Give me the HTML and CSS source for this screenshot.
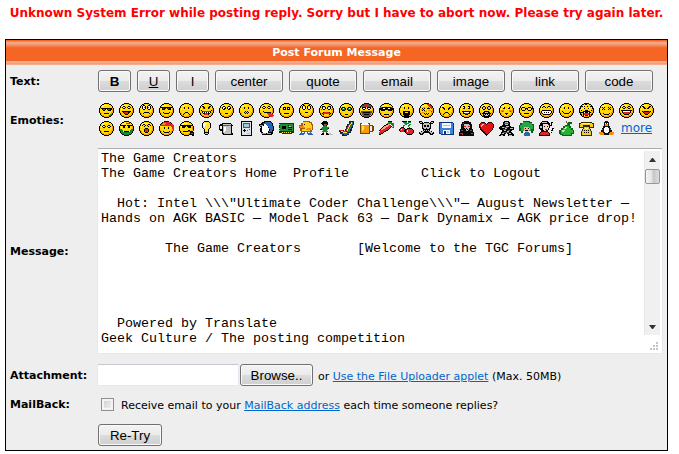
FILE: index.html
```html
<!DOCTYPE html>
<html lang="en">
<head>
    <meta charset="UTF-8">
    <meta name="viewport" content="width=device-width, initial-scale=1.0">
    <title>Post Forum Message</title>
    <link rel="stylesheet" href="styles.css">
</head>
<body>

    <svg class="sprite" aria-hidden="true">
        <symbol id="face" viewBox="0 0 15 15">
            <path fill="#000" d="M5 0h5v1h2v1h1v1h1v2h1v5h-1v2h-1v1h-1v1h-2v1h-5v-1h-2v-1h-1v-1h-1v-2h-1v-5h1v-2h1v-1h1v-1h2z"/>
            <path fill="#f0a000" d="M5 1h5v1h2v1h1v2h1v5h-1v2h-1v1h-2v1h-5v-1h-2v-1h-1v-2h-1v-5h1v-2h1v-1h2z"/>
            <path fill="#ffd90c" d="M5 1h5v1h2v1h1v6h-1v2h-1v1h-2v1h-4v-1h-2v-2h-1v-1h-1v-4h1v-2h1v-1h2z"/>
            <path fill="#fff27a" d="M4 2h4v1h-3v1h-2v3h-1v-2h1v-2h1z"/>
        </symbol>
    </svg>

    <p class="error">Unknown System Error while posting reply. Sorry but I have to abort now. Please try again later.</p>

    <form class="post-form" onsubmit="return false">
        <h1>Post Forum Message</h1>

        <div class="row text-row">
            <span class="label">Text:</span>
            <div class="buttons">
                <button type="button" class="small"><b>B</b></button>
                <button type="button" class="small"><u>U</u></button>
                <button type="button" class="small">I</button>
                <button type="button">center</button>
                <button type="button">quote</button>
                <button type="button">email</button>
                <button type="button">image</button>
                <button type="button">link</button>
                <button type="button">code</button>
            </div>
        </div>

        <div class="row emoties-row">
            <span class="label">Emoties:</span>
            <div class="emoties">
                <!-- first line -->
                <svg viewBox="0 0 15 15"><use href="#face"/><path class="k" d="M2 5.5h11M3 6.5h4M8 6.5h5M4 7.5h2M9 7.5h3M5 10.5h5"/><path class="g" d="M4 6.5h2M9 6.5h2M10 12.5h2M11 11.5h2"/></svg>
                <svg viewBox="0 0 15 15"><use href="#face"/><path class="k" d="M4 3.5h2M9 3.5h2M3 4.5h1M6 4.5h1M8 4.5h1M11 4.5h1M4 5.5h2M9 5.5h2M3 8.5h9M4 9.5h7M5 10.5h5M6 11.5h3"/><path class="w" d="M4 4.5h1M9 4.5h1"/><path class="r" d="M6 10.5h3M5 9.5h4"/></svg>
                <svg viewBox="0 0 15 15"><use href="#face"/><path class="k" d="M4 2.5h2M9 2.5h2M3 3.5h1M6 3.5h1M8 3.5h1M11 3.5h1M3 4.5h1M6 4.5h1M8 4.5h1M11 4.5h1M3 5.5h1M6 5.5h1M8 5.5h1M11 5.5h1M4 6.5h2M9 6.5h2M5 9.5h5M4 10.5h1M10 10.5h1"/><path class="w" d="M4 3.5h2M9 3.5h2M4 4.5h2M9 4.5h2M4 5.5h2M9 5.5h2"/><path class="r" d="M5 4.5h1M9 4.5h1"/></svg>
                <svg viewBox="0 0 15 15"><use href="#face"/><path class="k" d="M1 4.5h13M3 5.5h4M8 5.5h4M3 6.5h3M9 6.5h3M4 9.5h1M10 9.5h1M5 10.5h5"/><path class="d" d="M4 5.5h1M9 5.5h1"/></svg>
                <svg viewBox="0 0 15 15"><use href="#face"/><path class="k" d="M5 4.5h1M9 4.5h1M5 5.5h1M9 5.5h1M6 9.5h3M5 10.5h1M9 10.5h1M4 11.5h1M10 11.5h1"/></svg>
                <svg viewBox="0 0 15 15"><use href="#face"/><path class="k" d="M3 3.5h2M10 3.5h2M4 4.5h2M9 4.5h2M4 5.5h2M9 5.5h2M2 7.5h1M12 7.5h1M3 8.5h9M3 9.5h9M4 10.5h7M5 11.5h5"/><path class="r" d="M4 5.5h1M10 5.5h1M4 8.5h7M5 11.5h4M6 10.5h3"/><path class="w" d="M4 9.5h1M6 9.5h1M8 9.5h1M10 9.5h1"/></svg>
                <svg viewBox="0 0 15 15"><use href="#face"/><path class="k" d="M4 3.5h2M9 3.5h2M3 4.5h1M6 4.5h1M8 4.5h1M11 4.5h1M3 5.5h1M6 5.5h1M8 5.5h1M11 5.5h1M4 6.5h2M9 6.5h2M6 10.5h3"/><path class="w" d="M4 4.5h2M9 4.5h2M4 5.5h1M9 5.5h1"/><path class="k" d="M5 5.5h1M10 5.5h1"/></svg>
                <svg viewBox="0 0 15 15"><use href="#face"/><path class="k" d="M5 4.5h1M9 4.5h1M5 5.5h1M9 5.5h1M6 8.5h1M8 8.5h1M7 9.5h1M6 10.5h1M8 10.5h1M5 9.5h1M9 9.5h1"/></svg>
                <svg viewBox="0 0 15 15"><use href="#face"/><path class="k" d="M4 3.5h2M9 3.5h2M3 4.5h1M6 4.5h1M8 4.5h1M11 4.5h1M4 5.5h2M9 5.5h2M4 8.5h1M5 9.5h7"/><path class="w" d="M4 4.5h1M9 4.5h1"/><path class="r" d="M8 10.5h4M9 11.5h5M10 12.5h5M11 13.5h3"/></svg>
                <svg viewBox="0 0 15 15"><use href="#face"/><path class="k" d="M4 4.5h3M8 4.5h3M4 5.5h1M6 5.5h1M8 5.5h1M10 5.5h1M4 6.5h3M8 6.5h3M5 10.5h5"/><path class="w" d="M5 5.5h1M9 5.5h1"/></svg>
                <svg viewBox="0 0 15 15"><use href="#face"/><path class="k" d="M4 2.5h2M9 2.5h2M3 3.5h1M6 3.5h1M8 3.5h1M11 3.5h1M3 4.5h1M6 4.5h1M8 4.5h1M11 4.5h1M3 5.5h1M6 5.5h1M8 5.5h1M11 5.5h1M4 6.5h2M9 6.5h2M6 9.5h3"/><path class="w" d="M4 4.5h2M9 4.5h2M4 5.5h2M9 5.5h2"/></svg>
                <svg viewBox="0 0 15 15"><use href="#face"/><path class="k" d="M3 3.5h3M9 3.5h3M3 4.5h1M6 4.5h1M8 4.5h1M11 4.5h1M3 5.5h1M6 5.5h1M8 5.5h1M11 5.5h1M4 6.5h2M9 6.5h2M4 9.5h7M3 10.5h9M4 11.5h1M10 11.5h1"/><path class="w" d="M4 5.5h2M9 5.5h2"/><path class="r" d="M4 10.5h7M5 9.5h5M2 6.5h1M12 6.5h1"/></svg>
                <svg viewBox="0 0 15 15"><use href="#face"/><path class="k" d="M3 4.5h3M9 4.5h3M2 5.5h1M6 5.5h1M8 5.5h1M12 5.5h1M2 6.5h1M6 6.5h1M8 6.5h1M12 6.5h1M3 7.5h3M9 7.5h3M6 11.5h3"/><path class="g" d="M3 5.5h3M9 5.5h3M3 6.5h3M9 6.5h3"/><path class="w" d="M4 5.5h1M10 5.5h1"/></svg>
                <svg viewBox="0 0 15 15"><use href="#face"/><path class="d" d="M5 1.5h5M3 2.5h9M2 3.5h11M2 8.5h11M2 9.5h11M3 10.5h9M3 11.5h9M4 12.5h7M5 13.5h5"/><path class="k" d="M3 4.5h4M8 4.5h4M3 5.5h1M6 5.5h1M8 5.5h1M11 5.5h1M4 6.5h2M9 6.5h2M4 9.5h7M5 11.5h5"/><path class="w" d="M4 5.5h2M9 5.5h2"/><path class="r" d="M6 1.5h2M7 3.5h1"/></svg>
                <svg viewBox="0 0 15 15"><use href="#face"/><path class="k" d="M1 4.5h13M0 5.5h15M0 6.5h15M2 7.5h4M9 7.5h4M5 11.5h5"/><path class="g" d="M1 4.5h2M12 4.5h2"/><path class="w" d="M4 5.5h2M9 5.5h2"/></svg>
                <svg viewBox="0 0 15 15"><use href="#face"/><path class="k" d="M5 4.5h1M9 4.5h1M5 5.5h1M9 5.5h1M4 8.5h7M4 9.5h2M9 9.5h2M4 10.5h7M4 11.5h7M5 12.5h5M5 13.5h5"/></svg>
                <svg viewBox="0 0 15 15"><use href="#face"/><path class="o" d="M2 6.5h2M5 8.5h3M3 9.5h2M9 7.5h3M4 4.5h2"/><path class="k" d="M3 5.5h1M5 5.5h1M4 6.5h1M3 7.5h1M5 7.5h1M8 5.5h3M5 10.5h1M7 10.5h1M9 10.5h1M6 11.5h1M8 11.5h1"/><path class="r" d="M8 1.5h3M9 2.5h3M10 3.5h3M11 4.5h2M12 5.5h1M12 8.5h1M9 4.5h1"/></svg>
                <svg viewBox="0 0 15 15"><use href="#face"/><path class="k" d="M3 4.5h2M10 4.5h2M4 5.5h2M9 5.5h2M5 6.5h1M9 6.5h1M6 9.5h3M5 10.5h1M9 10.5h1M4 11.5h1M10 11.5h1"/></svg>
                <svg viewBox="0 0 15 15"><use href="#face"/><path class="k" d="M4 3.5h2M9 3.5h2M4 4.5h2M9 4.5h2M4 5.5h2M9 5.5h2M3 8.5h9M4 9.5h1M10 9.5h1M4 10.5h7M6 11.5h3"/><path class="w" d="M5 9.5h5M4 4.5h1M9 4.5h1"/><path class="r" d="M6 10.5h3"/></svg>
                <svg viewBox="0 0 15 15"><use href="#face"/><path class="k" d="M4 3.5h2M9 3.5h2M3 4.5h1M6 4.5h1M8 4.5h1M11 4.5h1M3 5.5h1M6 5.5h1M8 5.5h1M11 5.5h1M4 6.5h2M9 6.5h2M5 8.5h5M4 9.5h7M3 10.5h9M4 11.5h7M4 12.5h7M4 13.5h7M5 14.5h5"/><path class="s" d="M4 4.5h2M9 4.5h2M4 5.5h2M9 5.5h2M6 9.5h3M5 11.5h1M7 11.5h1M9 11.5h1M6 12.5h3"/></svg>
                <svg viewBox="0 0 15 15"><use href="#face"/><path class="k" d="M4 4.5h2M9 4.5h2M4 5.5h2M9 5.5h2M6 10.5h3M7 11.5h1"/><path class="w" d="M4 4.5h1M9 4.5h1"/><path class="o" d="M2 7.5h3M10 7.5h3M2 8.5h3M10 8.5h3"/><path class="r" d="M3 8.5h1M11 8.5h1"/></svg>
                <svg viewBox="0 0 15 15"><use href="#face"/><path class="k" d="M3 4.5h3M9 4.5h3M2 5.5h1M6 5.5h3M12 5.5h2M2 6.5h1M6 6.5h1M8 6.5h1M12 6.5h1M3 7.5h3M9 7.5h3M5 10.5h5"/><path class="y" d="M3 5.5h3M9 5.5h3M3 6.5h3M9 6.5h3"/></svg>
                <svg viewBox="0 0 15 15"><use href="#face"/><path class="k" d="M4 3.5h2M9 3.5h2M3 4.5h1M6 4.5h1M8 4.5h1M11 4.5h1M3 7.5h9M2 8.5h11M2 9.5h11M3 10.5h9M4 11.5h7"/><path class="w" d="M3 8.5h9M3 9.5h2M6 9.5h1M8 9.5h1M10 9.5h2M4 10.5h7"/></svg>
                <svg viewBox="0 0 15 15"><use href="#face"/><path class="k" d="M5 4.5h1M9 4.5h1M5 5.5h1M9 5.5h1M3 8.5h1M11 8.5h1M4 9.5h1M10 9.5h1M5 10.5h5"/></svg>
                <svg viewBox="0 0 15 15"><use href="#face"/><path class="k" d="M3 1.5h1M6 1.5h2M10 1.5h1M2 3.5h2M5 3.5h1M8 3.5h1M11 3.5h2M1 5.5h1M4 5.5h2M9 5.5h2M13 5.5h1M2 7.5h1M6 7.5h3M12 7.5h1M1 9.5h2M4 8.5h7M3 9.5h9M4 10.5h7M4 11.5h7M4 12.5h7M2 11.5h1M12 11.5h1"/><path class="r" d="M5 10.5h5M5 11.5h5"/><path class="w" d="M5 9.5h1M9 9.5h1M5 12.5h1M9 12.5h1M4 5.5h1M10 5.5h1"/></svg>
                <svg viewBox="0 0 15 15"><use href="#face"/><path class="k" d="M3 4.5h1M5 4.5h1M9 4.5h1M11 4.5h1M4 5.5h1M10 5.5h1M3 6.5h1M5 6.5h1M9 6.5h1M11 6.5h1M4 10.5h1M10 10.5h1M5 11.5h5"/></svg>
                <svg viewBox="0 0 15 15"><use href="#face"/><path class="k" d="M4 3.5h2M9 3.5h2M3 4.5h1M6 4.5h1M8 4.5h1M11 4.5h1M4 5.5h2M9 5.5h2M2 7.5h11M3 8.5h9M3 9.5h9M4 10.5h7M5 11.5h5"/><path class="r" d="M4 9.5h7M5 10.5h5"/><path class="w" d="M4 8.5h7"/></svg>
                <svg viewBox="0 0 15 15"><use href="#face"/><path class="k" d="M3 3.5h2M10 3.5h2M4 4.5h2M9 4.5h2M5 5.5h2M8 5.5h2M3 8.5h9M4 9.5h7M5 10.5h5M6 11.5h3"/><path class="r" d="M5 9.5h5M6 10.5h3M4 8.5h1M10 8.5h1"/></svg>

                <!-- second line -->
                <svg viewBox="0 0 15 15"><use href="#face"/><path class="k" d="M4 4.5h2M9 4.5h2M3 5.5h1M6 5.5h1M8 5.5h1M11 5.5h1M4 6.5h2M9 6.5h2M5 10.5h5"/><path class="w" d="M4 5.5h1M9 5.5h1"/></svg>
                <svg viewBox="0 0 15 15"><use href="#face"/><path class="k" d="M2 4.5h5M8 4.5h5M4 5.5h2M9 5.5h2M4 6.5h2M9 6.5h2M5 10.5h5"/><path class="g" d="M1 8.5h2M12 8.5h2M1 9.5h3M11 9.5h3M2 10.5h2M11 10.5h2M2 11.5h11M3 12.5h9M5 13.5h5M7 2.5h4"/></svg>
                <svg viewBox="0 0 15 15"><use href="#face"/><path class="k" d="M4 3.5h2M9 3.5h2M3 4.5h1M6 4.5h1M8 4.5h1M11 4.5h1M5 5.5h1M9 5.5h1M6 7.5h3M5 8.5h5M5 9.5h5M5 10.5h5M6 11.5h3"/><path class="r" d="M6 8.5h3M6 9.5h3M6 10.5h3"/></svg>
                <svg viewBox="0 0 15 15"><use href="#face"/><path class="r" d="M4 1.5h7M3 2.5h9M2 3.5h12M1 4.5h14M12 5.5h3M13 6.5h2M13 7.5h2M14 8.5h1M14 9.5h1"/><path class="o" d="M4 2.5h3M3 3.5h3"/><path class="k" d="M5 6.5h1M9 6.5h1M5 7.5h1M9 7.5h1M4 10.5h1M10 10.5h1M5 11.5h5"/></svg>
                <svg viewBox="0 0 15 15"><use href="#face"/><path class="k" d="M1 4.5h13M3 5.5h4M8 5.5h4M3 6.5h3M9 6.5h3M4 10.5h5M9 9.5h2M10 10.5h3M11 11.5h4M11 12.5h4M12 13.5h3M13 14.5h2"/><path class="n" d="M9 10.5h2M12 12.5h2M14 9.5h1"/></svg>
                <svg viewBox="0 0 15 15"><path class="k" d="M5 0.5h5M4 1.5h7M3 2.5h9M3 3.5h9M3 4.5h9M3 5.5h9M3 6.5h9M4 7.5h7M5 8.5h5M5 9.5h5M5 10.5h5M5 11.5h5M5 12.5h5M6 13.5h3"/><path class="y" d="M5 1.5h5M4 2.5h7M4 3.5h7M4 4.5h7M4 5.5h7M4 6.5h7M5 7.5h5M6 8.5h3M6 9.5h3"/><path class="w" d="M5 2.5h3M4 3.5h3M4 4.5h2M5 5.5h1"/><path class="s" d="M6 10.5h3M6 12.5h3"/></svg>
                <svg viewBox="0 0 15 15"><path class="k" d="M3 2.5h9M1 3.5h12M0 4.5h14M0 5.5h4M12 5.5h1M0 6.5h1M3 6.5h10M0 7.5h1M3 7.5h10M0 8.5h13M1 9.5h12M3 10.5h10M3 11.5h10M3 12.5h11M4 13.5h10"/><path class="s" d="M4 3.5h8M4 5.5h8M4 6.5h8M4 7.5h8M4 8.5h8M4 9.5h8M4 10.5h8M4 11.5h8M5 12.5h7"/><path class="n" d="M4 4.5h8"/><path class="w" d="M5 6.5h2M5 7.5h2M5 8.5h2M5 9.5h2M5 10.5h1M1 5.5h2"/></svg>
                <svg viewBox="0 0 15 15"><path fill="#000" d="M2 0h11v15h-11z"/><path fill="#dfe3ea" d="M3 1h9v13h-9z"/><path fill="#555" d="M4 2h7v5h-7z"/><path fill="#a8c5d8" d="M5 3h5v3h-5z"/><path class="k" d="M5 8.5h1M4 9.5h3M5 10.5h1"/><path class="r" d="M10 8.5h1M8 9.5h1"/><path class="s" d="M8 12.5h3"/></svg>
                <svg viewBox="0 0 15 15"><path class="k" d="M5 0.5h7M3 1.5h10M2 2.5h12M0 3.5h14M0 4.5h14M1 5.5h14M2 6.5h13M1 7.5h14M1 8.5h14M1 9.5h14M1 10.5h13M2 11.5h12M2 12.5h12M3 13.5h10"/><path class="b" d="M6 1.5h6M4 2.5h9M7 3.5h6M8 4.5h5M9 5.5h5M10 6.5h4M10 7.5h4M11 8.5h3M11 9.5h2M10 10.5h3"/><path class="w" d="M5 3.5h2M5 4.5h3M3 5.5h6M3 6.5h6M3 7.5h7M3 8.5h7M3 9.5h7M3 10.5h6M4 11.5h5"/><path class="o" d="M1 4.5h3M2 12.5h5M8 12.5h4"/></svg>
                <svg viewBox="0 0 15 15"><path fill="#063b12" d="M0 2h15v10h-2v1h-10v-1h-3z"/><path fill="#238b35" d="M1 3h13v7h-13z"/><path class="k" d="M3 5.5h4M3 6.5h4M3 7.5h4M9 4.5h1M9 6.5h4M9 8.5h4"/><path class="s" d="M0 3.5h1M0 7.5h1M0 9.5h1M10 5.5h2"/><path class="y" d="M3 11.5h1M5 11.5h1M7 11.5h1M9 11.5h1M11 11.5h1"/></svg>
                <svg viewBox="0 0 15 15"><path fill="#a65b00" d="M4 0h7v1h2v2h1v6h-1v2h-11v-1h-1v-3h-1v-3h2v-2h2z"/><path fill="#ffd020" d="M4 1h6v1h2v2h1v5h-2v1h-8v-2h3v-1h-4v-2h2z"/><path class="o" d="M0 5.5h5M1 6.5h5M8 7.5h4M7 8.5h5"/><path class="k" d="M5 3.5h1"/><path class="b" d="M2 11.5h4M8 11.5h4M1 12.5h5M8 12.5h5M0 13.5h5M9 13.5h5"/><path class="w" d="M3 11.5h2M9 11.5h2"/></svg>
                <svg viewBox="0 0 15 15"><path class="k" d="M4 0.5h4M3 1.5h6M2 2.5h7M3 3.5h6M4 4.5h4"/><path class="n" d="M5 3.5h3M5 4.5h2M2 7.5h1M9 6.5h1M4 11.5h1M7 11.5h1"/><path class="g" d="M4 5.5h4M3 6.5h6M2 7.5h7M3 8.5h6M4 9.5h4M3 10.5h6"/><path class="k" d="M1 8.5h2M9 7.5h1M3 12.5h2M7 12.5h2M2 13.5h3M7 13.5h3"/><path class="s" d="M9 12.5h3M10 13.5h4"/></svg>
                <svg viewBox="0 0 15 15"><path fill="#123" d="M12 0h3v4h-1v3h-1v3h-1v2h-2v2h-2v1h-5v-2h-2v-2h-1v-2h5v1h1v-2h1v-3h1v-2h2v-3h2z"/><path class="r" d="M11 2.5h1M10 3.5h1M9 4.5h1M9 5.5h1M8 6.5h1M8 7.5h1M7 8.5h1M7 9.5h1M1 9.5h3M4 10.5h3"/><path class="y" d="M12 1.5h1M12 2.5h1M11 3.5h1M10 4.5h1M10 5.5h1M9 6.5h1M9 7.5h1M8 8.5h1M8 9.5h1M2 10.5h2M4 11.5h4"/><path class="g" d="M13 1.5h1M13 2.5h1M12 3.5h1M11 4.5h1M11 5.5h1M10 6.5h1M10 7.5h1M9 8.5h1M9 9.5h1M3 12.5h5M8 10.5h2"/><path class="b" d="M13 3.5h1M12 4.5h1M12 5.5h1M11 6.5h1M11 7.5h1M10 8.5h1M10 9.5h1M10 10.5h1M5 13.5h3M8 12.5h2"/></svg>
                <svg viewBox="0 0 15 15"><path fill="#7b4300" d="M1 2h10v2h3v1h1v5h-1v1h-3v2h-10z"/><path fill="#eee" d="M11 5h2v5h-2z"/><path fill="#f59a09" d="M2 4h8v8h-8z"/><path class="w" d="M2 3.5h8M3 2.5h6"/><path class="y" d="M3 5.5h2M3 6.5h2M3 7.5h2M3 8.5h2M3 9.5h1"/></svg>
                <svg viewBox="0 0 15 15"><path class="g" d="M9 1.5h4M8 2.5h7M12 3.5h3M13 4.5h2M14 5.5h1M13 6.5h2"/><path class="k" d="M9 0.5h4M7 3.5h2M5 4.5h2M4 5.5h1M3 6.5h1M2 7.5h1M1 8.5h1M0 9.5h1M12 5.5h1M11 6.5h1M10 7.5h1M9 8.5h1M7 9.5h2M5 10.5h2M4 11.5h1M2 12.5h2M0 13.5h2"/><path stroke="#f6a28b" d="M9 3.5h2M7 4.5h3M5 5.5h4M4 6.5h3M3 7.5h3M2 8.5h2"/><path class="r" d="M10 4.5h2M9 5.5h3M7 6.5h4M6 7.5h4M4 8.5h5M1 9.5h6M1 10.5h4M0 11.5h4M0 12.5h2"/></svg>
                <svg viewBox="0 0 15 15"><path class="g" d="M4 1.5h4M5 2.5h5M9 1.5h3M10 3.5h2M6 3.5h2M4 4.5h2M4 5.5h1M3 6.5h1M9 4.5h2M9 5.5h1M10 6.5h1"/><path class="k" d="M3 0.5h5M9 0.5h3M2 6.5h3M1 7.5h5M0 8.5h7M0 9.5h7M1 10.5h5M8 7.5h5M7 8.5h7M6 9.5h9M6 10.5h9M6 11.5h9M7 12.5h7M8 13.5h5"/><path class="r" d="M2 7.5h3M1 8.5h5M1 9.5h4M2 10.5h3M8 8.5h5M7 9.5h7M7 10.5h7M7 11.5h7M8 12.5h5"/><path class="w" d="M2 8.5h1M8 9.5h1M8 10.5h1"/></svg>
                <svg viewBox="0 0 15 15"><path class="k" d="M0 0.5h3M12 0.5h3M0 1.5h4M5 1.5h5M11 1.5h4M1 2.5h13M3 3.5h9M3 4.5h9M3 5.5h9M3 6.5h9M3 7.5h9M4 8.5h7M4 9.5h7M2 10.5h11M0 11.5h15M0 12.5h5M10 12.5h5M1 13.5h3M11 13.5h3"/><path class="s" d="M1 1.5h2M12 1.5h2M5 2.5h5M4 3.5h7M4 4.5h7M4 5.5h7M4 6.5h7M5 7.5h5M5 9.5h5M3 10.5h2M10 10.5h2M1 11.5h3M11 11.5h3M2 12.5h1M12 12.5h1"/><path class="k" d="M5 4.5h2M8 4.5h2M5 5.5h2M8 5.5h2M7 7.5h1M6 9.5h1M8 9.5h1"/></svg>
                <svg viewBox="0 0 15 15"><path fill="#0d327f" d="M0 1h14v1h1v12h-13v-1h-2z"/><path fill="#3c83db" d="M1 2h13v11h-12v-1h-1z"/><path fill="#f5f8fc" d="M3 2h9v5h-9zM4 9h7v4h-7z"/><path class="s" d="M4 4.5h7M8 10.5h2M8 11.5h2"/><path fill="#0d327f" d="M5 10h2v3h-2z"/></svg>
                <svg viewBox="0 0 15 15"><path fill="#0a0a0a" d="M5 0h5v1h2v2h1v5h1v3h1v4h-15v-4h1v-3h1v-5h1v-2h2z"/><path class="d" d="M4 2.5h1M3 4.5h1M2 9.5h2M11 9.5h2M1 12.5h3"/><path class="s" d="M5 3.5h5M5 4.5h6M5 5.5h6M5 6.5h6M6 7.5h4M6 8.5h4M7 9.5h2"/><path class="r" d="M5 5.5h2M9 5.5h2M12 12.5h2M3 13.5h1"/><path class="k" d="M7 7.5h1M6 8.5h1M8 8.5h1"/></svg>
                <svg viewBox="0 0 15 15"><path fill="#300" d="M2 1h4v1h1v1h1v-1h1v-1h4v1h1v1h1v4h-1v2h-1v1h-1v1h-1v1h-1v1h-1v1h-1v1h-1v-1h-1v-1h-1v-1h-1v-1h-1v-1h-1v-1h-1v-2h-1v-4h1v-1h1z"/><path fill="#e31318" d="M2 2h4v1h1v1h1v-1h1v-1h4v1h1v4h-1v2h-1v1h-1v1h-1v1h-1v1h-2v-1h-1v-1h-1v-1h-1v-1h-1v-1h-1v-2h-1v-3h1z"/><path stroke="#ffb4b4" d="M3 3.5h2M2 4.5h2M2 5.5h1"/></svg>
                <svg viewBox="0 0 15 15"><path class="k" d="M5 0.5h5M4 1.5h7M4 2.5h7M4 3.5h7M3 4.5h8M1 5.5h11M0 6.5h15M0 7.5h15M1 8.5h14M3 9.5h10M3 10.5h9M2 11.5h11M2 12.5h5M8 12.5h6M1 13.5h5M9 13.5h6M0 14.5h6M9 14.5h6"/><path class="s" d="M6 1.5h3M6 3.5h3M3 6.5h2M7 5.5h3M6 7.5h2M11 7.5h3M5 9.5h2M8 10.5h2M3 12.5h2M10 12.5h2M2 14.5h2M10 14.5h3"/><path class="d" d="M5 2.5h5M5 6.5h4M4 8.5h3M9 9.5h2M4 11.5h6"/></svg>
                <svg viewBox="0 0 15 15"><path fill="#075b1b" d="M4 0h7v1h2v2h2v7h-1v2h-2v-2h-8v2h-2v-2h-2v-6h1v-2h3z"/><path fill="#24a847" d="M4 1h6v1h3v2h1v4h-2v2h-2v-4h-5v4h-3v-3h-1v-3h2v-2h1z"/><path stroke="#f2b592" d="M5 6.5h5M5 7.5h6M5 8.5h6M5 9.5h5M6 10.5h3"/><path class="k" d="M6 7.5h1M9 7.5h1M6 9.5h3"/><path class="b" d="M6 11.5h4M5 12.5h6M5 13.5h6M5 14.5h6"/></svg>
                <svg viewBox="0 0 15 15"><path class="k" d="M3 0.5h6M2 1.5h8M1 2.5h10M1 3.5h10M0 4.5h11M0 5.5h11M0 6.5h11M0 7.5h10M1 8.5h9M2 9.5h7M2 10.5h7M1 11.5h9M0 12.5h11M0 13.5h11M0 14.5h11M12 1.5h2M12 2.5h1M12 3.5h1M11 4.5h2M13 7.5h2M13 8.5h1M12 9.5h2M12 11.5h1"/><path stroke="#ffd3c2" d="M4 3.5h5M4 4.5h6M4 5.5h6M4 6.5h6M4 7.5h5M4 8.5h5M5 9.5h2"/><path class="s" d="M3 1.5h5M1 5.5h2M1 6.5h2"/><path class="k" d="M5 5.5h1M8 5.5h1"/><path class="r" d="M6 8.5h2M2 11.5h7M1 12.5h9M1 13.5h9"/></svg>
                <svg viewBox="0 0 15 15"><path class="n" d="M7 0.5h1M7 1.5h1M8 2.5h1"/><path fill="#07611b" d="M9 1h4v2h-2v2h1v2h2v2h1v4h-2v2h-10v-1h-2v-1h-1v-4h2v-2h2v-2h2v-1h2z"/><path fill="#26af35" d="M6 5h4v2h2v2h2v3h-2v2h-8v-1h-2v-4h2v-2h2z"/><path stroke="#bdf3a9" d="M6 6.5h2M5 7.5h2M3 9.5h3M3 10.5h2"/></svg>
                <svg viewBox="0 0 15 15"><path fill="#352800" d="M2 1h11v1h2v5h-4v1h1v2h1v5h-11v-5h1v-2h1v-1h-4v-5h2z"/><path fill="#f2cf1b" d="M2 2h11v1h1v3h-3v-2h-7v2h-3v-3h1zM5 6h5v2h1v2h1v4h-9v-4h1v-2h1z"/><path class="k" d="M5 9.5h1M7 9.5h1M9 9.5h1M5 11.5h1M7 11.5h1M9 11.5h1"/><path stroke="#fff6a1" d="M3 2.5h8M6 7.5h3"/></svg>
                <svg viewBox="0 0 15 15"><path fill="#111" d="M6 0h3v1h1v4h1v2h1v2h1v5h-11v-5h1v-2h1v-2h1v-4h1z"/><path class="w" d="M6 2.5h1M8 2.5h1M6 6.5h3M5 7.5h5M5 8.5h5M5 9.5h5M5 10.5h5M6 11.5h3"/><path class="o" d="M6 3.5h3M6 4.5h3M0 11.5h4M0 12.5h5M1 13.5h4M11 11.5h4M10 12.5h5M10 13.5h4"/><path class="b" d="M3 8.5h1M11 8.5h1"/></svg>
                <a class="more" href="#">more</a>
            </div>
        </div>

        <div class="row message-row">
            <label for="message">Message:</label>
            <div class="message-box">
<textarea id="message" name="message" spellcheck="false">The Game Creators
The Game Creators Home  Profile         Click to Logout

  Hot: Intel \\\"Ultimate Coder Challenge\\\"— August Newsletter —
Hands on AGK BASIC — Model Pack 63 — Dark Dynamix — AGK price drop!

        The Game Creators       [Welcome to the TGC Forums]




  Powered by Translate
Geek Culture / The posting competition</textarea>
                <div class="scrollbar">
                    <svg class="arrow" viewBox="0 0 7 4"><path d="M3 0h1l3 4h-7z"/></svg>
                    <span class="thumb"></span>
                    <svg class="arrow down" viewBox="0 0 7 4"><path d="M0 0h7l-3 4h-1z"/></svg>
                </div>
                <svg class="grip" viewBox="0 0 8 8"><path d="M6 0h2v2h-2zM3 3h2v2h-2zM6 3h2v2h-2zM0 6h2v2h-2zM3 6h2v2h-2zM6 6h2v2h-2z"/></svg>
            </div>
        </div>

        <div class="row attachment-row">
            <label for="attachment">Attachment:</label>
            <div class="field">
                <input type="text" id="attachment" name="attachment">
                <button type="button" class="browse">Browse..</button>
                <span class="note">or <a href="#">Use the File Uploader applet</a> (Max. 50MB)</span>
            </div>
        </div>

        <div class="row mailback-row">
            <span class="label">MailBack:</span>
            <div class="field">
                <input type="checkbox" id="mailback" name="mailback">
                <label for="mailback" class="note">Receive email to your <a href="#">MailBack address</a> each time someone replies?</label>
            </div>
        </div>

        <div class="row submit-row">
            <button type="submit" class="retry">Re-Try</button>
        </div>
    </form>

</body>
</html>
```

FILE: styles.css
```css
* {
    box-sizing: border-box;
}

body {
    margin: 5px 11px 0 5px;
    background: #fff;
    color: #000;
    font-family: Verdana, "DejaVu Sans", sans-serif;
    font-size: 11px;
    line-height: 16px;
}

a {
    color: #0066cc;
    text-decoration: underline;
}

.sprite {
    display: none;
}

.error {
    margin: 0 0 18px;
    color: #f00;
    font-size: 12px;
    font-weight: bold;
    text-align: center;
    white-space: nowrap;
}

.post-form {
    border: 1px solid #000;
    background: #eee;
    padding-bottom: 4px;
}

h1 {
    margin: 0;
    height: 25px;
    padding-top: 5px;
    background: linear-gradient(#f56523 0, #f56523 1px, #f3aa8a 2px, #f3a27c 4px, #f56523 8px, #f56523 21px, #f3aa8a 21px, #f3aa8a 23px, #f58e60 24px, #f9c9b4 25px);
    color: #fff;
    font-size: 11px;
    text-align: center;
}

.row {
    display: grid;
    grid-template-columns: 87px 1fr;
    align-items: center;
    padding: 0 4px;
}

.label,
label {
    padding-top: 2px;
    font-weight: bold;
}

.note {
    padding-top: 4px;
    font-weight: normal;
}

/* buttons */
button {
    width: 68px;
    height: 22px;
    padding: 0;
    border: 1px solid #707070;
    border-radius: 3px;
    background: linear-gradient(#f3f3f3 0, #ebebeb 50%, #dcdcdc 50%, #cfcfcf 100%);
    box-shadow: inset 0 0 0 1px #fafafa;
    font-family: "Liberation Sans", Arial, sans-serif;
    color: #000;
}

.buttons {
    display: flex;
    gap: 6px;
    padding-left: 1px;
}

.text-row {
    padding-top: 5px;
}

.small {
    width: 33px;
}

/* emoties */
.emoties-row {
    padding-top: 11px;
}

.emoties {
    display: flex;
    flex-wrap: wrap;
    gap: 3px 5px;
    padding-left: 2px;
}

.emoties svg {
    width: 15px;
    height: 15px;
}

.more {
    height: 15px;
    margin-left: 2px;
    font-size: 12px;
    line-height: 14px;
}

.k { stroke: #000; }
.w { stroke: #fff; }
.r { stroke: #e3232a; }
.g { stroke: #13883a; }
.b { stroke: #2864b4; }
.o { stroke: #f58a10; }
.y { stroke: #ffe23c; }
.n { stroke: #8a5226; }
.s { stroke: #c0c0c0; }
.d { stroke: #5c5048; }

/* message */
.message-row {
    padding-top: 12px;
}

.message-box {
    position: relative;
    height: 206px;
}

textarea {
    display: block;
    width: 100%;
    height: 100%;
    padding: 2px 0 0 3px;
    border: 1px solid #e3e9ef;
    border-top-color: #abadb3;
    border-radius: 2px;
    background: #fff;
    color: #000;
    font-family: "Liberation Mono", "Courier New", monospace;
    line-height: 15px;
    overflow: hidden;
    white-space: pre;
    resize: none;
}

.scrollbar {
    position: absolute;
    top: 3px;
    right: 3px;
    bottom: 19px;
    width: 16px;
    display: flex;
    flex-direction: column;
    align-items: center;
    padding: 7px 0 6px;
    background: #f0f0f0;
    border-left: 1px solid #e6e6e6;
}

.arrow {
    width: 7px;
    height: 4px;
    fill: #333;
}

.down {
    margin-top: auto;
}

.thumb {
    width: 15px;
    height: 15px;
    margin-top: 7px;
    border: 1px solid #979797;
    border-radius: 2px;
    background: linear-gradient(to right, #f3f3f3, #e4e4e8 45%, #c5c6ca 55%, #dcdcdc);
}

.grip {
    position: absolute;
    right: 5px;
    bottom: 4px;
    width: 8px;
    height: 8px;
    fill: #c4c4c4;
}

/* attachment and mailback */
.field {
    display: flex;
    align-items: center;
}

.attachment-row {
    padding-top: 10px;
}

.field input[type="text"] {
    width: 142px;
    height: 22px;
    border: 1px solid #e3e9ef;
    border-top-color: #c4c8ce;
    border-radius: 2px;
    background: #fff;
}

.browse {
    width: 73px;
    margin: 0 5px 0 1px;
}

.mailback-row {
    padding-top: 8px;
}

.field input[type="checkbox"] {
    appearance: none;
    width: 13px;
    height: 13px;
    margin: 0 7px 0 4px;
    border: 1px solid #8e8f8f;
    background: linear-gradient(135deg, #c9ccd0, #f6f6f6);
    box-shadow: inset 0 0 0 2px #f4f4f4;
}

.submit-row {
    padding-top: 10px;
}

.retry {
    grid-column: 2;
    width: 64px;
    margin-left: 1px;
}
```
